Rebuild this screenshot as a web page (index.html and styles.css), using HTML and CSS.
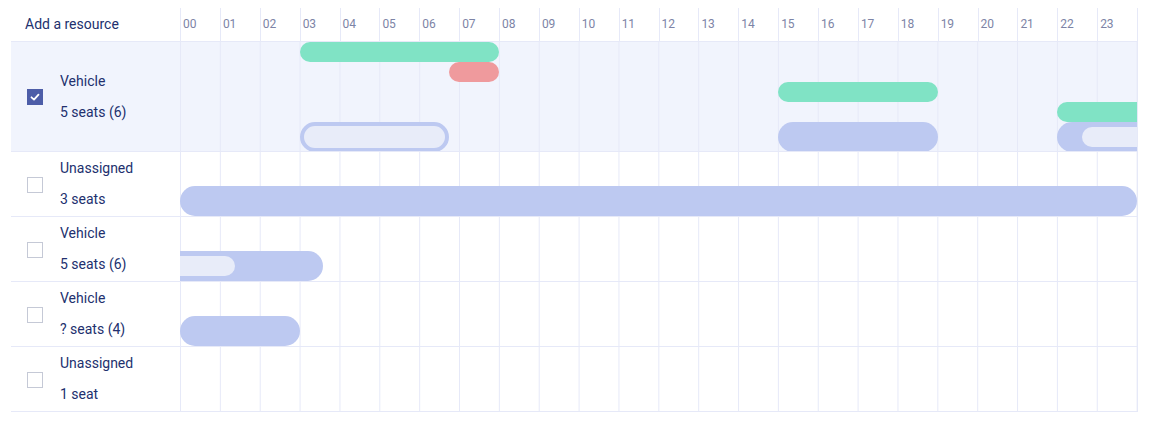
FILE: index.html
```html
<!DOCTYPE html>
<html lang="en">
<head>
    <meta charset="UTF-8">
    <title>Resource planner</title>
    <link rel="stylesheet" href="styles.css">
</head>
<body>
    <div class="planner">
        <div class="planner-head">
            <div class="head-label">Add a resource</div>
            <div class="hours">
                <span>00</span><span>01</span><span>02</span><span>03</span><span>04</span><span>05</span>
                <span>06</span><span>07</span><span>08</span><span>09</span><span>10</span><span>11</span>
                <span>12</span><span>13</span><span>14</span><span>15</span><span>16</span><span>17</span>
                <span>18</span><span>19</span><span>20</span><span>21</span><span>22</span><span>23</span>
            </div>
        </div>

        <div class="row row-selected row-tall">
            <div class="resource">
                <span class="check checked">
                    <svg width="10" height="10" viewBox="0 0 10 10"><polyline points="1.5,5.3 4,7.6 8.5,2.6" fill="none" stroke="#fff" stroke-width="1.8" stroke-linecap="round" stroke-linejoin="round"/></svg>
                </span>
                <div class="resource-text">
                    <div>Vehicle</div>
                    <div>5 seats (6)</div>
                </div>
            </div>
            <div class="timeline">
                <div class="bar bar-green lane-1" style="left: 12.5%; width: 20.833%;"></div>
                <div class="bar bar-red lane-2" style="left: 28.125%; width: 5.208%;"></div>
                <div class="bar bar-green lane-3" style="left: 62.5%; width: 16.667%;"></div>
                <div class="bar bar-green lane-4 open-end" style="left: 91.667%; width: 12%;"></div>
                <div class="bar bar-outline lane-5" style="left: 12.5%; width: 15.625%;"></div>
                <div class="bar bar-blue lane-5" style="left: 62.5%; width: 16.667%;"></div>
                <div class="bar bar-blue lane-5 open-end" style="left: 91.667%; width: 12%;">
                    <div class="bar-inner inner-right"></div>
                </div>
            </div>
        </div>

        <div class="row">
            <div class="resource">
                <span class="check"></span>
                <div class="resource-text">
                    <div>Unassigned</div>
                    <div>3 seats</div>
                </div>
            </div>
            <div class="timeline">
                <div class="bar bar-blue lane-low" style="left: 0%; width: 100%;"></div>
            </div>
        </div>

        <div class="row">
            <div class="resource">
                <span class="check"></span>
                <div class="resource-text">
                    <div>Vehicle</div>
                    <div>5 seats (6)</div>
                </div>
            </div>
            <div class="timeline">
                <div class="bar bar-blue lane-low open-start" style="left: -5%; width: 19.92%;">
                    <div class="bar-inner inner-left" style="width: 103px;"></div>
                </div>
            </div>
        </div>

        <div class="row">
            <div class="resource">
                <span class="check"></span>
                <div class="resource-text">
                    <div>Vehicle</div>
                    <div>? seats (4)</div>
                </div>
            </div>
            <div class="timeline">
                <div class="bar bar-blue lane-low" style="left: 0%; width: 12.5%;"></div>
            </div>
        </div>

        <div class="row">
            <div class="resource">
                <span class="check"></span>
                <div class="resource-text">
                    <div>Unassigned</div>
                    <div>1 seat</div>
                </div>
            </div>
            <div class="timeline"></div>
        </div>
    </div>
</body>
</html>
```

FILE: styles.css
```css
:root {
    --text-color: #22306e;
    --hour-color: #7d84a6;
    --line-color: #e6e9f8;
    --selected-bg: #f1f4fd;
    --bar-blue: #bdc9f1;
    --bar-inner: #e8ecf9;
    --bar-green: #80e3c5;
    --bar-red: #ef9a9d;
    --check-color: #4d5da8;
}

body {
    margin: 0;
    padding: 8px 0 0 11px;
    font-family: 'Roboto', 'Arial', sans-serif;
    color: var(--text-color);
    background-color: #FFFFFF;
}

.planner {
    width: 1127px;
}

.planner-head {
    display: flex;
    height: 33px;
    border-bottom: 1px solid var(--line-color);
}

.head-label {
    width: 169px;
    padding-left: 14px;
    box-sizing: border-box;
    font-size: 14px;
    line-height: 33px;
}

.hours {
    flex: 1;
    display: flex;
    border-right: 1px solid var(--line-color);
}

.hours span {
    flex: 1;
    border-left: 1px solid var(--line-color);
    padding-left: 2px;
    font-size: 12px;
    line-height: 33px;
    color: var(--hour-color);
}

.row {
    display: flex;
    height: 64px;
    border-bottom: 1px solid var(--line-color);
}

.row-tall {
    height: 109px;
}

.row-selected {
    background-color: var(--selected-bg);
}

.resource {
    width: 169px;
    display: flex;
    align-items: center;
    padding-left: 16px;
    box-sizing: border-box;
}

.check {
    width: 16px;
    height: 16px;
    box-sizing: border-box;
    border: 1px solid #c5c9d6;
    background-color: #FFFFFF;
    margin-right: 17px;
    display: flex;
    align-items: center;
    justify-content: center;
    margin-top: 1px;
}

.check.checked {
    background-color: var(--check-color);
    border-color: var(--check-color);
}

.resource-text {
    font-size: 14px;
    line-height: 31px;
}

.timeline {
    flex: 1;
    position: relative;
    overflow: hidden;
    border-right: 1px solid var(--line-color);
    background-image: linear-gradient(to right, var(--line-color) 1px, transparent 1px);
    background-size: calc(100% / 24) 100%;
}

.bar {
    position: absolute;
    height: 20px;
    border-radius: 10px;
    box-sizing: border-box;
    overflow: hidden;
}

.bar-green {
    background-color: var(--bar-green);
}

.bar-red {
    background-color: var(--bar-red);
}

.bar-blue {
    background-color: var(--bar-blue);
}

.bar-outline {
    background-color: var(--bar-inner);
    border: 4px solid var(--bar-blue);
}

.lane-1 { top: 0; }
.lane-2 { top: 20px; }
.lane-3 { top: 40px; }
.lane-4 { top: 60px; }

.lane-5 {
    top: 80px;
    height: 30px;
    border-radius: 15px;
}

.lane-low {
    bottom: 0;
    height: 30px;
    border-radius: 15px;
}

.open-end {
    border-top-right-radius: 0;
    border-bottom-right-radius: 0;
}

.open-start {
    border-top-left-radius: 0;
    border-bottom-left-radius: 0;
}

.bar-inner {
    position: absolute;
    top: 5px;
    bottom: 5px;
    background-color: var(--bar-inner);
}

.inner-right {
    left: 25px;
    right: 0;
    border-radius: 10px 0 0 10px;
}

.inner-left {
    left: 0;
    border-radius: 0 10px 10px 0;
}
```
